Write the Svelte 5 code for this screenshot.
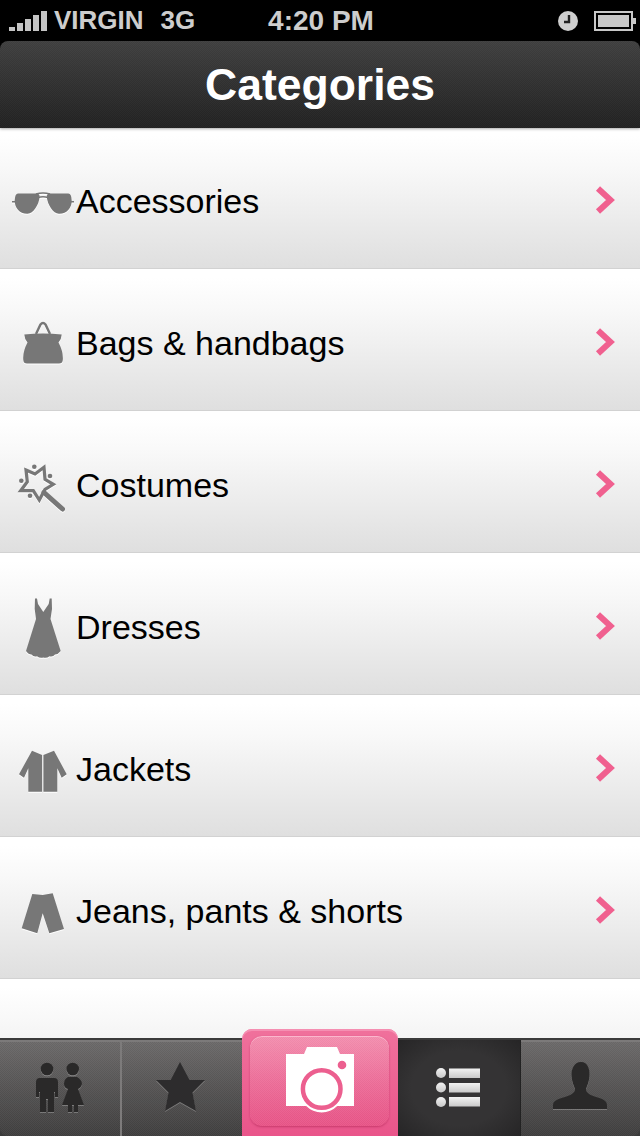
<script>
  const categories = [
    { name: 'Accessories', icon: 'glasses' },
    { name: 'Bags & handbags', icon: 'bag' },
    { name: 'Costumes', icon: 'wand' },
    { name: 'Dresses', icon: 'dress' },
    { name: 'Jackets', icon: 'jacket' },
    { name: 'Jeans, pants & shorts', icon: 'pants' }
  ];
  const lens = 'M18 30.500H36.500Q40 30.500 39.600 34.500C38.500 42 33.500 50.500 27.500 50.800C19.500 51 14.500 44.500 14.700 37.500Q15 30.500 18 30.500Z';
</script>

{#snippet icon(kind)}
  <svg class="cat-icon" viewBox="0 0 76 76" width="76" height="76">
    {#if kind === 'glasses'}
      <path d={lens} />
      <path d={lens} transform="matrix(-1 0 0 1 86.400 0)" />
      <path class="line" d="M12 38.700H16M70 38.700H74M36 31Q43 29 50 31M38 34.500Q43 33 48 34.500" stroke-width="1.600" />
    {:else if kind === 'bag'}
      <path d="M24.300 29.500Q34 28.500 43 28.500Q52 28.500 61.700 29.500Q61.500 34 58.500 37.500Q63.500 47 62.800 55Q62.500 58.500 59 58.500H27Q23.500 58.500 23.300 55Q22.500 47 27.500 37.500Q24.500 34 24.300 29.500Z" />
      <path class="line" d="M36 29L40.500 19.500Q43 16.500 45.500 19.500L50 29" stroke-width="2.400" />
    {:else if kind === 'wand'}
      <path class="line" stroke-linejoin="miter" d="M26 23L35 27L44 20.300L45 32.300L53.300 37.300L45 42.300L39.300 53L33.300 43.700L20.700 43.700L27.300 34.700Z" stroke-width="3.200" />
      <path class="line" d="M44 45.500L62.500 62" stroke-width="5" stroke-linecap="round" />
      <circle cx="34.300" cy="19.700" r="2.300" />
      <circle cx="50" cy="29" r="2.300" />
      <circle cx="21.300" cy="33.700" r="2.300" />
      <circle cx="30" cy="48.700" r="2.300" />
    {:else if kind === 'dress'}
      <path d="M35 9.500H37L38 15L43.300 23L48.700 15L49.700 9.500H51.700L52 20L50.500 30L60.700 62Q58 65.500 55 65.500Q53 68 49.500 67.200Q46.500 69.600 43.300 68.500Q40 69.600 37 67.200Q33.500 68 31.500 65.500Q28.500 65.500 26 62L36 30L34.700 20Z" />
    {:else if kind === 'jacket'}
      <path d="M32 19.700L42.100 24V60.700H28.300V37.300L24 46.700L19 43.300Z" />
      <path d="M54 19.700L43.400 24V60.700H57.300V37.300L61.700 46.700L66.700 43.300Z" />
    {:else}
      <path d="M32.300 21L42.700 22L52.700 20.300L64 56L49.300 60.300L42.700 40.300L37.300 60.300L21.700 55.300Z" />
    {/if}
  </svg>
{/snippet}

<div class="phone">
  <div class="statusbar">
    <div class="status-left">
      <span class="signal"><i></i><i></i><i></i><i></i><i></i></span>
      <span>VIRGIN</span>
      <span class="net">3G</span>
    </div>
    <div class="time">4:20 PM</div>
    <div class="status-right">
      <svg viewBox="0 0 22 22" width="22" height="22">
        <circle cx="11" cy="11" r="10" fill="#cfcfcf" />
        <path d="M12 5V12H7" fill="none" stroke="#222" stroke-width="2.400" />
      </svg>
      <svg viewBox="0 0 43 22" width="43" height="22">
        <rect x="1" y="2" width="37" height="18" fill="none" stroke="#c8c8c8" stroke-width="2" />
        <rect x="4" y="5" width="31" height="12" fill="#c8c8c8" />
        <rect x="39" y="8" width="3" height="6" fill="#c8c8c8" />
      </svg>
    </div>
  </div>

  <header class="navbar">
    <h1>Categories</h1>
  </header>

  <div class="list">
    {#each categories as cat}
      <div class="row">
        {@render icon(cat.icon)}
        <span class="label">{cat.name}</span>
        <svg class="chevron" viewBox="0 0 20 30" width="20" height="30">
          <polyline points="3,2.500 15.500,14 3,25.500" fill="none" stroke="#f0608f" stroke-width="6" />
        </svg>
      </div>
    {/each}
    <div class="row"></div>
  </div>

  <nav class="tabbar">
    <div class="tab first">
      <svg viewBox="0 1040 120 96" width="120" height="96">
        <g fill="#2a2929" class="pressed">
          <circle cx="47" cy="1069" r="6.300" />
          <path d="M40 1078H54Q58 1078 58 1082V1097H55V1092H54V1112H48V1099H46V1112H40V1092H39V1097H36V1082Q36 1078 40 1078Z" />
          <circle cx="72.700" cy="1069" r="6.300" />
          <path d="M68 1077H77Q82 1080 82 1084Q81 1088 78 1089L84 1105H78V1112H74V1105H72V1112H68V1105H62L68 1089Q64 1088 64 1084Q64 1079 68 1077Z" />
        </g>
      </svg>
    </div>
    <div class="tab second">
      <svg viewBox="122 1040 118 96" width="118" height="96">
        <path class="pressed" fill="#2d2c2d" d="M180 1062L189.500 1080H205L192.500 1092.500L196 1111L180 1102L165 1111L168.500 1092.500L156 1080H170.700Z" />
      </svg>
    </div>
    <div class="camera">
      <div class="camera-inner">
        <svg viewBox="250 1036 139 90" width="139" height="90">
          <path fill="#fff" d="M286 1054H304L307 1047H337L340 1054H354V1106H286Z" />
          <circle cx="321.700" cy="1090.500" r="22" fill="#fff" />
          <circle cx="321.700" cy="1089" r="18.800" fill="#fff" stroke="#ec5f8f" stroke-width="4.500" />
          <circle cx="342" cy="1065" r="4.300" fill="#ec5f8f" />
        </svg>
      </div>
    </div>
    <div class="tab active">
      <svg viewBox="398 1040 122 96" width="122" height="96">
        <defs>
          <linearGradient id="bar" x1="0" y1="0" x2="0" y2="1">
            <stop offset="0" stop-color="#f2f2f2" />
            <stop offset="1" stop-color="#c9c9c9" />
          </linearGradient>
        </defs>
        <g fill="url(#bar)">
          <circle cx="441" cy="1073" r="5" />
          <circle cx="441" cy="1087.500" r="5" />
          <circle cx="441" cy="1102" r="5" />
          <rect x="449" y="1068.500" width="31" height="9.500" />
          <rect x="449" y="1083" width="31" height="9.500" />
          <rect x="449" y="1097" width="31" height="9.500" />
        </g>
      </svg>
    </div>
    <div class="tab last">
      <svg viewBox="521 1040 119 96" width="119" height="96">
        <path class="pressed" fill="#2a2929" d="M581 1062C588 1062 590 1070 589.500 1076C589 1082 587 1086 586 1089C586 1093 590 1095 596 1097C603 1099 607 1101 607 1105V1109H553V1105C553 1101 558 1099 565 1097C571 1095 575 1093 575 1089C574 1086 572 1082 571.500 1076C571 1070 574 1062 581 1062Z" />
      </svg>
    </div>
  </nav>
</div>

<style>
  :global(body) {
    background: #000;
  }

  .phone {
    width: 640px;
    height: 1136px;
    display: flex;
    flex-direction: column;
    overflow: hidden;
    background: #000;
    font-family: "Liberation Sans", Arial, sans-serif;
  }

  .statusbar {
    height: 41px;
    flex: none;
    display: grid;
    grid-template-columns: 1fr auto 1fr;
    align-items: center;
    padding: 0 3px 0 9px;
    color: #cdcdcd;
    font-size: 26px;
    font-weight: bold;
  }

  .status-left {
    display: flex;
    align-items: center;
  }

  .signal {
    display: flex;
    align-items: flex-end;
    gap: 2px;
    height: 20px;
    margin-right: 7px;
  }

  .signal i {
    width: 6px;
    background: #c4c4c4;
  }
  .signal i:nth-child(1) { height: 4px; }
  .signal i:nth-child(2) { height: 8px; }
  .signal i:nth-child(3) { height: 12px; }
  .signal i:nth-child(4) { height: 16px; }
  .signal i:nth-child(5) { height: 20px; }

  .net {
    margin-left: 17px;
  }

  .time {
    font-size: 28px;
    margin-right: 4px;
  }

  .status-right {
    display: flex;
    justify-content: flex-end;
    align-items: center;
    gap: 15px;
    padding-top: 1px;
  }

  .navbar {
    height: 87px;
    flex: none;
    position: relative;
    z-index: 2;
    display: flex;
    align-items: center;
    justify-content: center;
    border-radius: 8px 8px 0 0;
    background:
      repeating-conic-gradient(rgba(255, 255, 255, 0.02) 0 25%, rgba(0, 0, 0, 0.02) 0 50%) 0 0 / 2px 2px,
      linear-gradient(#404040, #222);
    box-shadow: 0 1px 3px rgba(0, 0, 0, 0.35);
  }

  h1 {
    margin: 1px 0 0;
    color: #fff;
    font-size: 44.500px;
    font-weight: bold;
  }

  .list {
    flex: 1;
    min-height: 0;
    margin-top: -1px;
    overflow: hidden;
    background: #fff;
  }

  .row {
    height: 142px;
    box-sizing: border-box;
    display: flex;
    align-items: center;
    padding: 7px 25px 0 0;
    background: linear-gradient(#fff 6%, #f8f8f8 30%, #dfdfdf);
    border-bottom: 1px solid #d2d2d2;
  }

  .cat-icon {
    flex: none;
    fill: #777;
    filter: drop-shadow(0 1px 0 #fff);
  }

  .line {
    fill: none;
    stroke: #777;
  }

  .label {
    flex: 1;
    color: #000;
    font-size: 34px;
  }

  .chevron {
    flex: none;
    margin-top: -1px;
  }

  .tabbar {
    flex: none;
    height: 98px;
    position: relative;
    z-index: 3;
    display: flex;
    background: #3a3a3a;
  }

  .tab {
    margin-top: 2px;
    display: flex;
    box-sizing: border-box;
    box-shadow: inset 0 2px 0 #7c7a7a;
    background:
      repeating-conic-gradient(rgba(255, 255, 255, 0.03) 0 25%, rgba(0, 0, 0, 0.03) 0 50%) 0 0 / 2px 2px,
      linear-gradient(#6d6b6b, #403f3f);
  }

  .tab svg {
    display: block;
  }

  .first {
    width: 122px;
    border-right: 2px solid #7d7b7b;
    border-radius: 0 0 0 8px;
  }

  .second {
    width: 120px;
  }

  .camera {
    width: 156px;
    flex: none;
    margin-top: -9px;
    padding: 7px 9px 10px 8px;
    box-sizing: border-box;
    height: 107px;
    border-radius: 10px 10px 0 0;
    background: linear-gradient(#f0719c, #e9558a);
    box-shadow: inset 0 2px 0 #f58fb2;
  }

  .camera-inner {
    height: 90px;
    border-radius: 12px;
    overflow: hidden;
    background:
      repeating-conic-gradient(rgba(255, 255, 255, 0.04) 0 25%, rgba(0, 0, 0, 0.02) 0 50%) 0 0 / 2px 2px,
      linear-gradient(#f590b0, #ee6f9a 50%, #e95588);
    box-shadow: 0 1px 2px rgba(170, 30, 80, 0.5), inset 0 1px 0 #fbb7cd;
  }

  .active {
    width: 122px;
    box-shadow: none;
    background: radial-gradient(ellipse at center, #343334 55%, #262526);
  }

  .last {
    flex: 1;
    border-left: 1px solid #222;
    border-radius: 0 0 8px 0;
  }

  .pressed {
    filter: drop-shadow(0 1px 0 rgba(255, 255, 255, 0.25));
  }
</style>
